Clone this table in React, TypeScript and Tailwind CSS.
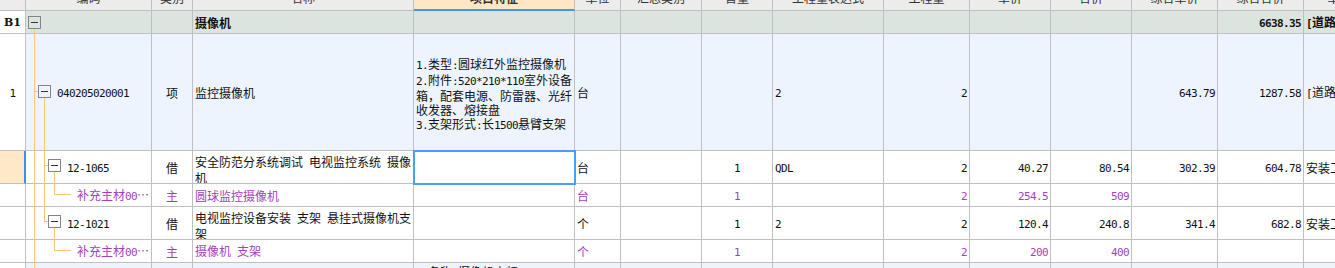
import React from 'react'
import clsx from 'clsx'

// column alignment: c = centre, l = left, r = right, t = tree column
const align = ['c', 't', 'c', 'l', 'l', 'l', 'l', 'c', 'l', 'r', 'r', 'r', 'r', 'r', 'l']
const alignClass: Record<string, string> = {
  c: 'justify-center',
  l: 'justify-start pl-[2px]',
  r: 'justify-end pr-[2px]',
  t: 'justify-start',
}

const headers = [
  '', '编码', '类别', '名称', '项目特征', '单位', '汇总类别', '含量',
  '工程量表达式', '工程量', '单价', '合价', '综合单价', '综合合价', '单价构成文件',
]

// ASCII runs are set in a narrow mono face so digits take 6px like the original grid
function T({ s }: { s: string }) {
  return (
    <>
      {s.split(/([\x20-\x7e]+)/).map((p, i) =>
        /^[\x20-\x7e]+$/.test(p) ? (
          <span key={i} className="font-['DejaVu_Sans_Mono'] text-[11px] tracking-[-0.62px]">
            {p}
          </span>
        ) : (
          p
        ),
      )}
    </>
  )
}

function Cell({
  col,
  children,
  className,
}: {
  col: number
  children?: React.ReactNode
  className?: string
}) {
  return (
    <div
      className={clsx(
        'flex items-center overflow-hidden whitespace-nowrap border-r border-b border-[#c0c0c0] pt-[2px]',
        alignClass[align[col]],
        className,
      )}
    >
      {children}
    </div>
  )
}

type RowCells = Record<number, React.ReactNode>

function Row({
  cells,
  bg,
  first = 'bg-white',
  tree,
  className,
  overrides = {},
}: {
  cells: RowCells
  bg: string
  first?: string
  tree?: string
  className?: string
  overrides?: Record<number, string>
}) {
  return (
    <>
      {headers.map((_, i) => (
        <Cell
          key={i}
          col={i}
          className={clsx(i === 0 ? first : bg, i === 1 && tree, className, overrides[i])}
        >
          {typeof cells[i] === 'string' ? (
            <span>
              <T s={cells[i] as string} />
            </span>
          ) : (
            cells[i]
          )}
        </Cell>
      ))}
    </>
  )
}

function Lines({ lines }: { lines: string[] }) {
  return (
    <div className="mt-[4px] leading-[14px]">
      {lines.map((l, i) => (
        <div key={i}>
          <T s={l} />
        </div>
      ))}
    </div>
  )
}

function TreeOverlay() {
  const line = '#ffc870'
  const box = (x: number, y: number) => (
    <g>
      <rect x={x + 0.5} y={y + 0.5} width={12} height={12} fill="none" stroke="#858585" />
      <line x1={x + 3} x2={x + 10} y1={y + 6.5} y2={y + 6.5} stroke="#333" />
    </g>
  )
  return (
    <svg className="pointer-events-none absolute left-0 top-0" width={160} height={268}>
      <line x1={34.5} x2={34.5} y1={29} y2={268} stroke={line} />
      <line x1={34} x2={38} y1={91.5} y2={91.5} stroke={line} />
      <line x1={44.5} x2={44.5} y1={98} y2={222} stroke={line} />
      <line x1={44} x2={48} y1={165.5} y2={165.5} stroke={line} />
      <line x1={44} x2={48} y1={221.5} y2={221.5} stroke={line} />
      <line x1={54.5} x2={54.5} y1={172} y2={195} stroke={line} />
      <line x1={54} x2={71} y1={194.5} y2={194.5} stroke={line} />
      <line x1={54.5} x2={54.5} y1={228} y2={251} stroke={line} />
      <line x1={54} x2={71} y1={250.5} y2={250.5} stroke={line} />
      {box(28, 16)}
      {box(38, 85)}
      {box(48, 159)}
      {box(48, 215)}
    </svg>
  )
}

export default function App() {
  const purple = 'text-[#a23fc0]'
  return (
    <div className="relative h-[268px] w-[1335px] overflow-hidden bg-white font-['Noto_Sans_CJK_SC',sans-serif] text-[12px] leading-[14px] text-[#111]">
      <div className="grid w-max grid-cols-[26px_126px_41px_221px_161px_46px_81px_71px_111px_86px_81px_81px_86px_86px_120px] grid-rows-[11px_23px_117px_33px_23px_33px_23px_20px]">
        {/* header, only its lower edge is in view */}
        {headers.map((h, i) => (
          <div
            key={i}
            className={clsx(
              'flex items-start justify-center overflow-hidden whitespace-nowrap border-r border-b border-[#c0c0c0]',
              i === 4 ? 'border-b-2 border-b-[#3d97f3] bg-[#ffe7c6] font-bold' : 'bg-[#ececec]',
            )}
          >
            <span className="-mt-[9px] leading-[14px] text-[#333]">{h}</span>
          </div>
        ))}

        <Row
          bg="bg-[#dbe4de]"
          className="font-bold"
          cells={{
            0: <span className="font-['DejaVu_Serif'] text-[11px]">B1</span>,
            3: '摄像机',
            13: '6638.35',
            14: '[道路工程]',
          }}
        />

        <Row
          bg="bg-[#edf4fe]"
          tree="pl-[31px]"
          cells={{
            0: '1',
            1: '040205020001',
            2: '项',
            3: '监控摄像机',
            4: (
              <Lines
                lines={[
                  '1.类型:圆球红外监控摄像机',
                  '2.附件:520*210*110室外设备',
                  '箱，配套电源、防雷器、光纤',
                  '收发器、熔接盘',
                  '3.支架形式:长1500悬臂支架',
                ]}
              />
            ),
            5: '台',
            8: '2',
            9: '2',
            12: '643.79',
            13: '1287.58',
            14: '[道路工程]',
          }}
        />

        <Row
          bg="bg-white"
          first="bg-[#ffe8c8] border-r-2 border-r-[#3d8ef0]"
          tree="pl-[41px]"
          overrides={{ 4: 'relative z-10 outline-2 outline-[#4a9ff5] -outline-offset-1' }}
          cells={{
            1: '12-1065',
            2: '借',
            3: <Lines lines={['安全防范分系统调试 电视监控系统 摄像', '机']} />,
            5: '台',
            7: '1',
            8: 'QDL',
            9: '2',
            10: '40.27',
            11: '80.54',
            12: '302.39',
            13: '604.78',
            14: '安装工程',
          }}
        />

        <Row
          bg="bg-white"
          tree="pl-[51px]"
          className={purple}
          cells={{
            1: '补充主材00…',
            2: '主',
            3: '圆球监控摄像机',
            5: '台',
            7: '1',
            9: '2',
            10: '254.5',
            11: '509',
          }}
        />

        <Row
          bg="bg-white"
          tree="pl-[41px]"
          cells={{
            1: '12-1021',
            2: '借',
            3: <Lines lines={['电视监控设备安装 支架 悬挂式摄像机支', '架']} />,
            5: '个',
            7: '1',
            8: '2',
            9: '2',
            10: '120.4',
            11: '240.8',
            12: '341.4',
            13: '682.8',
            14: '安装工程',
          }}
        />

        <Row
          bg="bg-white"
          tree="pl-[51px]"
          className={purple}
          cells={{
            1: '补充主材00…',
            2: '主',
            3: '摄像机 支架',
            5: '个',
            7: '1',
            9: '2',
            10: '200',
            11: '400',
          }}
        />

        <Row
          bg="bg-[#edf4fe]"
          className="items-start"
          cells={{
            4: '1.名称:摄像机立杆',
          }}
        />
      </div>
      <TreeOverlay />
    </div>
  )
}
